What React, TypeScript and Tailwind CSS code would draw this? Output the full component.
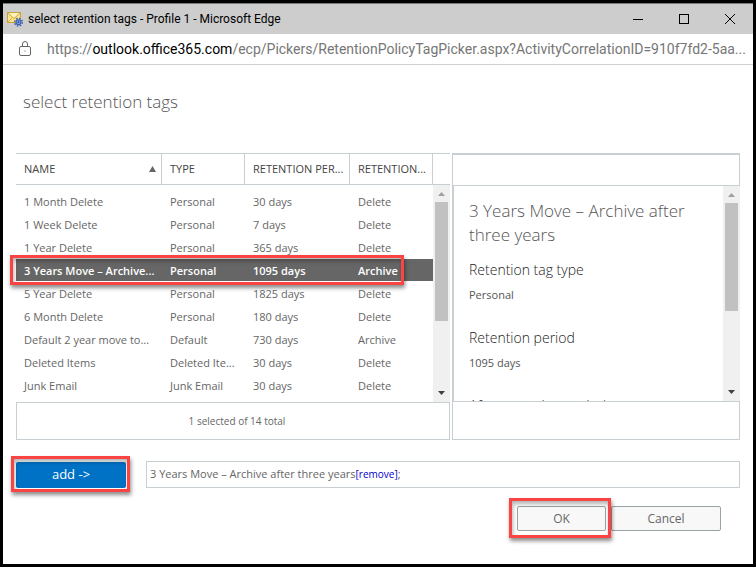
import React from "react";

type Tag = { name: string; type: string; period: string; action: string; selected?: boolean };

const tags: Tag[] = [
  { name: "1 Month Delete", type: "Personal", period: "30 days", action: "Delete" },
  { name: "1 Week Delete", type: "Personal", period: "7 days", action: "Delete" },
  { name: "1 Year Delete", type: "Personal", period: "365 days", action: "Delete" },
  { name: "3 Years Move – Archive...", type: "Personal", period: "1095 days", action: "Archive", selected: true },
  { name: "5 Year Delete", type: "Personal", period: "1825 days", action: "Delete" },
  { name: "6 Month Delete", type: "Personal", period: "180 days", action: "Delete" },
  { name: "Default 2 year move to...", type: "Default", period: "730 days", action: "Archive" },
  { name: "Deleted Items", type: "Deleted Ite...", period: "30 days", action: "Delete" },
  { name: "Junk Email", type: "Junk Email", period: "30 days", action: "Delete" },
];

const columns = "grid grid-cols-[146fr_83fr_105fr_83fr]";
const highlight =
  "pointer-events-none absolute border-3 border-[#fa4343] shadow-[1px_3px_4px_rgba(0,0,0,0.45),inset_1px_3px_4px_rgba(0,0,0,0.3)]";

function MailIcon() {
  return (
    <svg width="16" height="16" viewBox="0 0 16 16" className="shrink-0" aria-hidden="true">
      <rect x="0.5" y="1.5" width="13" height="10" fill="#fbe28a" stroke="#c9a23c" />
      <path d="M1 11 5.500 6.500M13 11 8.500 6.500" stroke="#d9b250" fill="none" />
      <path d="M1 2l6 5.500L13 2" stroke="#c9a23c" fill="#fff3bd" />
      <circle cx="11.500" cy="11.200" r="3.800" fill="none" stroke="#3d5fa8" strokeWidth="1.500" strokeDasharray="1.600 1.384" />
      <circle cx="11.500" cy="11.200" r="2.400" fill="#8db0ea" stroke="#3a62b8" strokeWidth="1.200" />
      <circle cx="11.500" cy="11.200" r="0.900" fill="#22418a" />
    </svg>
  );
}

function LockIcon() {
  return (
    <svg width="12" height="16" viewBox="0 0 12 16" className="shrink-0" fill="none" stroke="#666" aria-hidden="true">
      <rect x="0.500" y="5.500" width="11" height="9" rx="1.500" />
      <path d="M3.500 5.500V3a2.500 2.500 0 0 1 5 0v2.500" />
      <rect x="5.500" y="9.500" width="1" height="1" fill="#666" stroke="none" />
    </svg>
  );
}

function ScrollBar({ tall }: { tall: boolean }) {
  return (
    <div className="flex w-[17px] shrink-0 grow flex-col items-center bg-[#f0f0f0]" aria-hidden="true">
      <svg width="17" height="17" viewBox="0 0 17 17" className="shrink-0">
        <path d="M5 11h7L8.500 7z" fill="#a0a0a0" />
      </svg>
      <div className={tall ? "h-[119px] w-[13px] bg-[#c1c1c1]" : "h-[108px] w-[13px] bg-[#c1c1c1]"} />
      <svg width="17" height="17" viewBox="0 0 17 17" className="mt-auto shrink-0">
        <path d="M5 6h7L8.500 10z" fill="#404040" />
      </svg>
    </div>
  );
}

function TitleBar() {
  return (
    <header className="flex h-[31px] items-center border-t border-[#777] bg-[#cdcdcd] pl-[4px] text-black">
      <MailIcon />
      <h1 className="ml-[5px] grow truncate font-[Roboto,sans-serif] text-[12px]">
        select retention tags - Profile 1 - Microsoft Edge
      </h1>
      <button type="button" aria-label="Minimize" className="flex h-full w-[46px] items-center justify-center">
        <svg width="10" height="10" viewBox="0 0 10 10"><path d="M0 5.500h10" stroke="#000" /></svg>
      </button>
      <button type="button" aria-label="Maximize" className="flex h-full w-[46px] items-center justify-center">
        <svg width="10" height="10" viewBox="0 0 10 10"><rect x="0.500" y="0.500" width="9" height="9" fill="none" stroke="#000" /></svg>
      </button>
      <button type="button" aria-label="Close" className="flex h-full w-[46px] items-center justify-center">
        <svg width="10" height="10" viewBox="0 0 10 10"><path d="M0 0l10 10M10 0L0 10" stroke="#000" /></svg>
      </button>
    </header>
  );
}

function TagList() {
  const heading = "flex items-center border-r border-[#c8cfd2] pl-2 text-left font-normal whitespace-nowrap";
  return (
    <section className="flex min-w-0 flex-[434_1_0%] flex-col">
      <div className="flex border-t border-[#c8cfd2]">
        <table className="block min-w-0 grow">
          <thead className="block">
            <tr className={`${columns} h-[31px] border-b border-[#c8cfd2] text-[11px] text-[#444]`}>
              <th className={heading}>
                <span className="grow">NAME</span>
                <svg width="7" height="6" viewBox="0 0 7 6" className="mr-[5px]"><path d="M0 6h7L3.500 0z" fill="#666" /></svg>
              </th>
              <th className={heading}>TYPE</th>
              <th className={heading}>RETENTION PER...</th>
              <th className={heading}>RETENTION...</th>
            </tr>
          </thead>
          <tbody className="block py-[5px] text-[11px]">
            {tags.map((tag) => (
              <tr
                key={tag.name}
                aria-selected={!!tag.selected}
                className={`${columns} relative h-[23px] border-b border-white leading-6 whitespace-nowrap ${
                  tag.selected ? "bg-[#666] font-semibold text-white" : "text-[#666]"
                }`}
              >
                <td className="pl-2">{tag.name}</td>
                <td className="pl-2">{tag.type}</td>
                <td className="pl-2">{tag.period}</td>
                <td className="pl-2">
                  {tag.action}
                  {tag.selected && <span className={`${highlight} -top-1 right-[29px] -bottom-1 -left-1.5`} />}
                </td>
              </tr>
            ))}
          </tbody>
        </table>
        <div className="flex w-[17px] shrink-0 flex-col">
          <div className="h-[31px] border-b border-[#c8cfd2]" />
          <ScrollBar tall />
        </div>
      </div>
      <p className="flex h-[38px] items-center justify-center border border-[#c8cfd2] pl-2 text-[10px] text-[#666]">
        1 selected of 14 total
      </p>
    </section>
  );
}

function Details() {
  const label = "text-[14px] leading-6 font-light text-[#222]";
  return (
    <aside className="flex min-w-0 flex-[288_1_0%] flex-col">
      <div className="h-[33px] border border-t-2 border-[#c8cfd2]" />
      <div className="flex h-[215px] overflow-hidden border-l-2 border-[#c8cfd2]">
        <div className="min-w-0 grow pt-[13px] pr-4 pl-[15px] text-[#555]">
          <h2 className="text-[17px] leading-6 font-light">3 Years Move – Archive after three years</h2>
          <h3 className={`mt-[11px] ${label}`}>Retention tag type</h3>
          <p className="text-[11px] leading-[26px]">Personal</p>
          <h3 className={`mt-[18px] ${label}`}>Retention period</h3>
          <p className="text-[11px] leading-[26px]">1095 days</p>
          <h3 className={`mt-[18px] ${label}`}>After retention period</h3>
        </div>
        <div className="flex w-[17px] shrink-0 flex-col">
          <ScrollBar tall={false} />
        </div>
      </div>
      <div className="h-[39px] border border-[#c8cfd2]" />
    </aside>
  );
}

export default function App() {
  return (
    <div className="flex min-h-screen flex-col border-3 border-black bg-white font-['Open_Sans','Noto_Sans',sans-serif]">
      <TitleBar />
      <div className="flex h-[31px] items-center border-b border-[#d0d0d0] pl-4">
        <LockIcon />
        <p className="ml-4 min-w-0 truncate font-[Roboto,sans-serif] text-[14px] text-[#767676]">
          https://<span className="text-black">outlook.office365.com</span>
          /ecp/Pickers/RetentionPolicyTagPicker.aspx?ActivityCorrelationID=910f7fd2-5aa...
        </p>
      </div>
      <main className="px-[13px] pt-6">
        <h2 className="ml-[7px] text-[17px] leading-[26px] font-light text-[#555]">select retention tags</h2>
        <div className="mt-[38px] flex gap-[2px]">
          <TagList />
          <Details />
        </div>
        <div className="mt-[21px] flex items-start gap-5">
          <div className="relative">
            <button type="button" className="h-[26px] w-[110px] rounded-[2px] bg-[#0072c6] text-[13px] text-white">
              add -&gt;
            </button>
            <span className={`${highlight} -top-[5px] -right-1 -bottom-1 -left-[5px]`} />
          </div>
          <p className="flex h-[27px] grow items-center border border-[#c8cfd2] px-[3px] text-[11px] text-[#666]">
            3 Years Move – Archive after three years
            <a href="#remove" className="text-[10px] text-[#0000cc]">[remove]</a>;
          </p>
        </div>
        <div className="mt-[18px] mr-[19px] flex justify-end gap-[5px] text-[12px] text-[#666]">
          <div className="relative">
            <button type="button" className="h-[25px] w-[89px] rounded-[2px] border border-[#98a3a6] bg-[#f8f8f8]">OK</button>
            <span className={`${highlight} -top-2 -right-[5px] -bottom-[7px] -left-2`} />
          </div>
          <button type="button" className="h-[25px] w-[110px] rounded-[2px] border border-[#98a3a6] bg-[#f8f8f8]">Cancel</button>
        </div>
      </main>
    </div>
  );
}
